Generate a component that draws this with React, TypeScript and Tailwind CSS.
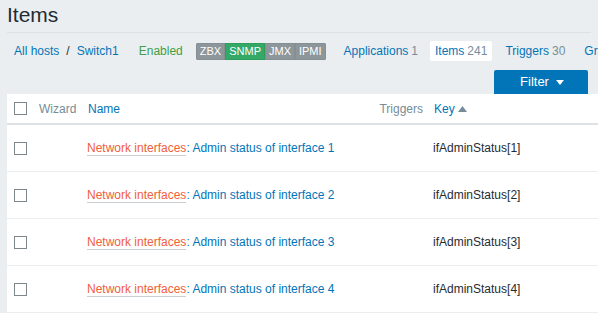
import React from "react";

const Checkbox = () => (
  <div className="w-[13px] h-[13px] border border-[#7d878c] bg-white box-border" />
);

const rows = [1, 2, 3, 4];

export default function App() {
  return (
    <div className="w-[598px] h-[313px] overflow-hidden bg-[#ebeef0] text-[12px] text-[#1f2c33] font-['Liberation_Sans',Arial,sans-serif]">
      {/* Title */}
      <div className="mx-[7px] h-[33px] border-b border-[#dce1e4] pt-[3px]">
        <h1 className="text-[21px] leading-[24px] font-normal m-0">Items</h1>
      </div>

      {/* Nav row */}
      <div className="flex w-max items-center h-[20px] mt-[8px] pl-[14px] whitespace-nowrap">
        <a className="shrink-0 text-[#0275b8]">All hosts</a>
        <span className="shrink-0 ml-[7px] mr-[7px]">/</span>
        <a className="shrink-0 text-[#0275b8]">Switch1</a>
        <span className="shrink-0 ml-[20px] text-[#429e47]">Enabled</span>
        <div className="shrink-0 ml-[13px] flex h-[17px] text-[11px] leading-[15px] text-white rounded-[2px] overflow-hidden">
          <span className="px-[3px] bg-[#8d969a] border border-[#858e92]">ZBX</span>
          <span className="px-[3px] bg-[#34a866] border border-[#2f9e5d]">SNMP</span>
          <span className="px-[3px] bg-[#8d969a] border border-[#858e92]">JMX</span>
          <span className="px-[3px] bg-[#8d969a] border border-[#858e92]">IPMI</span>
        </div>
        <div className="shrink-0 ml-[12px] px-[6px] h-[20px] flex items-center">
          <a className="text-[#0275b8]">Applications</a>
          <span className="ml-[3px] text-[#768d99]">1</span>
        </div>
        <div className="shrink-0 ml-[6px] px-[5px] h-[20px] flex items-center bg-white rounded-[2px]">
          <a className="text-[#0275b8]">Items</a>
          <span className="ml-[3px] text-[#768d99]">241</span>
        </div>
        <div className="shrink-0 ml-[7px] px-[6px] h-[20px] flex items-center">
          <a className="text-[#0275b8]">Triggers</a>
          <span className="ml-[3px] text-[#768d99]">30</span>
        </div>
        <div className="shrink-0 ml-[7px] px-[6px] h-[20px] flex items-center">
          <a className="text-[#0275b8]">Graphs</a>
          <span className="ml-[3px] text-[#768d99]">12</span>
        </div>
      </div>

      {/* Filter */}
      <div className="flex justify-end mt-[9px] pr-[10px]">
        <button className="w-[94px] h-[24px] bg-[#0275b8] text-white text-[13px] flex items-center justify-center gap-[7px] pl-[2px] rounded-t-[2px]">
          <span>Filter</span>
          <svg width="8" height="5" viewBox="0 0 8 5">
            <path d="M0 0 L8 0 L4 5 Z" fill="white" />
          </svg>
        </button>
      </div>

      {/* Table */}
      <div className="ml-[7px] w-[700px] bg-white">
        <div className="flex items-center h-[31px] border-b-2 border-[#dce1e4]">
          <div className="w-[25px] shrink-0 pl-[7px]"><Checkbox /></div>
          <div className="w-[49px] shrink-0 pl-[7px] text-[#768d99]">Wizard</div>
          <div className="w-[289px] shrink-0 pl-[7px] text-[#0275b8]">Name</div>
          <div className="w-[57px] shrink-0 pr-[4px] text-right text-[#768d99]">Triggers</div>
          <div className="pl-[7px] flex items-center gap-[3px]">
            <span className="text-[#0275b8]">Key</span>
            <svg width="9" height="6" viewBox="0 0 9 6">
              <path d="M0 6 L9 6 L4.5 0 Z" fill="#768d99" />
            </svg>
          </div>
        </div>
        {rows.map((n) => (
          <div key={n} className="flex items-center h-[47px] border-b border-[#ebeef0]">
            <div className="w-[25px] shrink-0 pl-[7px]"><Checkbox /></div>
            <div className="w-[49px] shrink-0" />
            <div className="w-[289px] shrink-0 pl-[6px] whitespace-nowrap">
              <span className="inline-block leading-[14px] text-[#f0603a] border-b border-[#c9cfd3]">Network interfaces</span>
              <span className="text-[#0275b8]">: Admin status of interface {n}</span>
            </div>
            <div className="w-[57px] shrink-0" />
            <div className="pl-[6px]">ifAdminStatus[{n}]</div>
          </div>
        ))}
      </div>
    </div>
  );
}
